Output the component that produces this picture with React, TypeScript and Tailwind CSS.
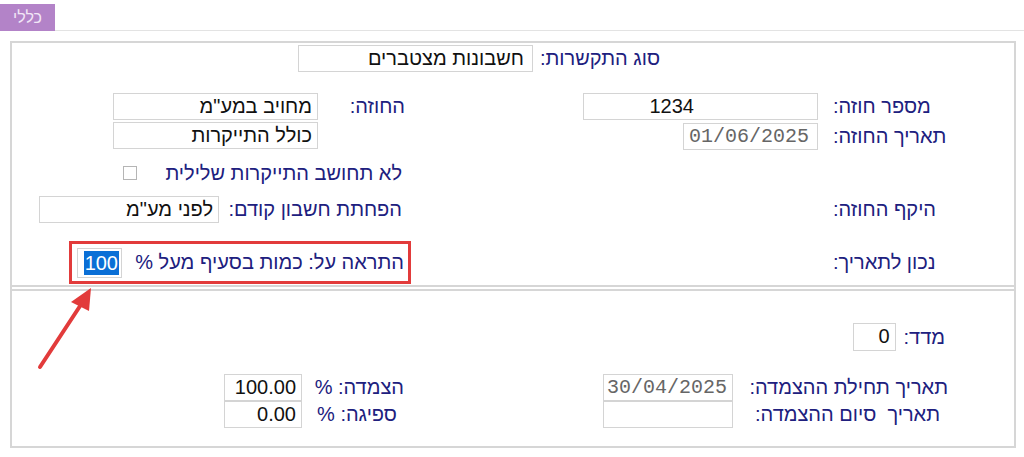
import React from "react";

const field = "h-[27px] border border-[#d4d4d4] bg-white text-[20px] leading-[25px] text-[#111] px-[5px] whitespace-nowrap overflow-hidden";
const label = "text-[20px] leading-[27px] text-[#20207e] whitespace-nowrap";
const dateText = "font-['Liberation_Mono',monospace] text-[18px] text-[#666]";

function Box({ w, className = "", children }: { w: string; className?: string; children?: React.ReactNode }) {
  return <div className={`${field} ${w} ${className}`}>{children}</div>;
}

export default function App() {
  return (
    <div
      className="relative w-[1024px] h-[457px] overflow-hidden bg-white"
      style={{ fontFamily: '"Liberation Sans", Arial, "DejaVu Sans", sans-serif' }}
    >
      <div className="h-[31px] pt-[4px] border-b border-[#e3e3e3]">
        <div className="w-[55px] h-[27px] bg-[#b383c8] text-[#f1e6f6] text-[16px] flex items-center justify-center">
          כללי
        </div>
      </div>

      <div dir="rtl" className="ml-[10px] mt-[10px] w-[1006px] h-[407px] border-2 border-[#d6d6d6]">
        {/* top section */}
        <div className="h-[242px] border-b-2 border-[#d6d6d6]">
          <div className="flex items-center mt-[2px] pr-[354px] gap-[7px]">
            <span className={label}>סוג התקשרות:</span>
            <Box w="w-[235px]" className="pr-[8px]">חשבונות מצטברים</Box>
          </div>

          <div className="flex mt-[21px] items-center">
            <div className="w-[594px] flex items-center">
              <span className={`${label} w-[181px] text-left`}>מספר חוזה:</span>
              <Box w="w-[235px] mr-[15px]" className="pr-[123px]">1234</Box>
            </div>
            <div className="flex items-center pr-[15px]">
              <span className={`${label} w-[87px]`}>החוזה:</span>
              <Box w="w-[205px]">מחויב במע"מ</Box>
            </div>
          </div>

          <div className="flex mt-[2px] items-start">
            <div className="w-[594px] flex items-center">
              <span className={`${label} w-[181px] text-left`}>תאריך החוזה:</span>
              <Box w="w-[135px] mr-[15px] mt-[1px]" className={`${dateText} text-left`}>
                01/06/2025
              </Box>
            </div>
            <div className="pr-[102px]">
              <Box w="w-[205px]">כולל התייקרות</Box>
            </div>
          </div>

          <div className="flex mt-[11px] h-[24px] items-center">
            <div className="w-[594px]" />
            <div className="flex items-center pr-[18px] gap-[28px]">
              <span className={label}>לא תחושב התייקרות שלילית</span>
              <span className="w-[14px] h-[14px] border border-[#b5b5b5] bg-white" />
            </div>
          </div>

          <div className="flex mt-[11px] items-center">
            <div className="w-[594px] flex items-center">
              <span className={`${label} w-[181px] text-left`}>היקף החוזה:</span>
            </div>
            <div className="flex items-center pr-[18px]">
              <span className={`${label} w-[183px]`}>הפחתת חשבון קודם:</span>
              <Box w="w-[180px]">לפני מע"מ</Box>
            </div>
          </div>

          <div className="flex mt-[18px] items-center">
            <div className="w-[594px] flex items-center">
              <span className={`${label} w-[181px] text-left`}>נכון לתאריך:</span>
            </div>
            <div className="pr-[9px]">
              <div className="w-[342px] h-[43px] border-[3px] border-[#e23b3b] flex items-center justify-between pr-[4px] pl-[5px]">
                <span className={label}>התראה על: כמות בסעיף מעל %</span>
                <div className="w-[45px] h-[30px] border border-[#d4d4d4] flex items-center justify-start pr-[2px]">
                  <span className="bg-[#0a6fd6] text-white text-[20px] leading-[24px] px-[1px]">100</span>
                </div>
              </div>
            </div>
          </div>
        </div>

        {/* bottom section */}
        <div className="mt-[2px] border-t-2 border-[#d6d6d6]">
          <div className="flex items-center mt-[32px] pr-[69px] gap-[8px]">
            <span className={label}>מדד:</span>
            <Box w="w-[43px] h-[28px]">0</Box>
          </div>

          <div className="flex items-center mt-[23px]">
            <div className="w-[594px] flex items-center pr-[66px]">
              <span className={`${label} w-[215px]`}>תאריך תחילת ההצמדה:</span>
              <Box w="w-[130px]" className={`${dateText} text-left`}>30/04/2025</Box>
            </div>
            <div className="flex items-center pr-[16px]">
              <span className={`${label} w-[102px]`}>הצמדה: %</span>
              <Box w="w-[78px]">100.00</Box>
            </div>
          </div>

          <div className="flex items-center">
            <div className="w-[594px] flex items-center pr-[66px]">
              <span className={`${label} w-[215px] pr-[8px]`}>תאריך&nbsp; סיום ההצמדה:</span>
              <Box w="w-[130px]" />
            </div>
            <div className="flex items-center pr-[16px]">
              <span className={`${label} w-[102px] pr-[7px]`}>ספיגה: %</span>
              <Box w="w-[78px]">0.00</Box>
            </div>
          </div>
        </div>
      </div>

      <svg className="absolute left-0 top-0 pointer-events-none" width="1024" height="457">
        <line x1="40" y1="367" x2="82" y2="303" stroke="#e23b3b" strokeWidth="4" strokeLinecap="round" />
        <polygon points="91,288 71,302 89,311" fill="#e23b3b" />
      </svg>
    </div>
  );
}
